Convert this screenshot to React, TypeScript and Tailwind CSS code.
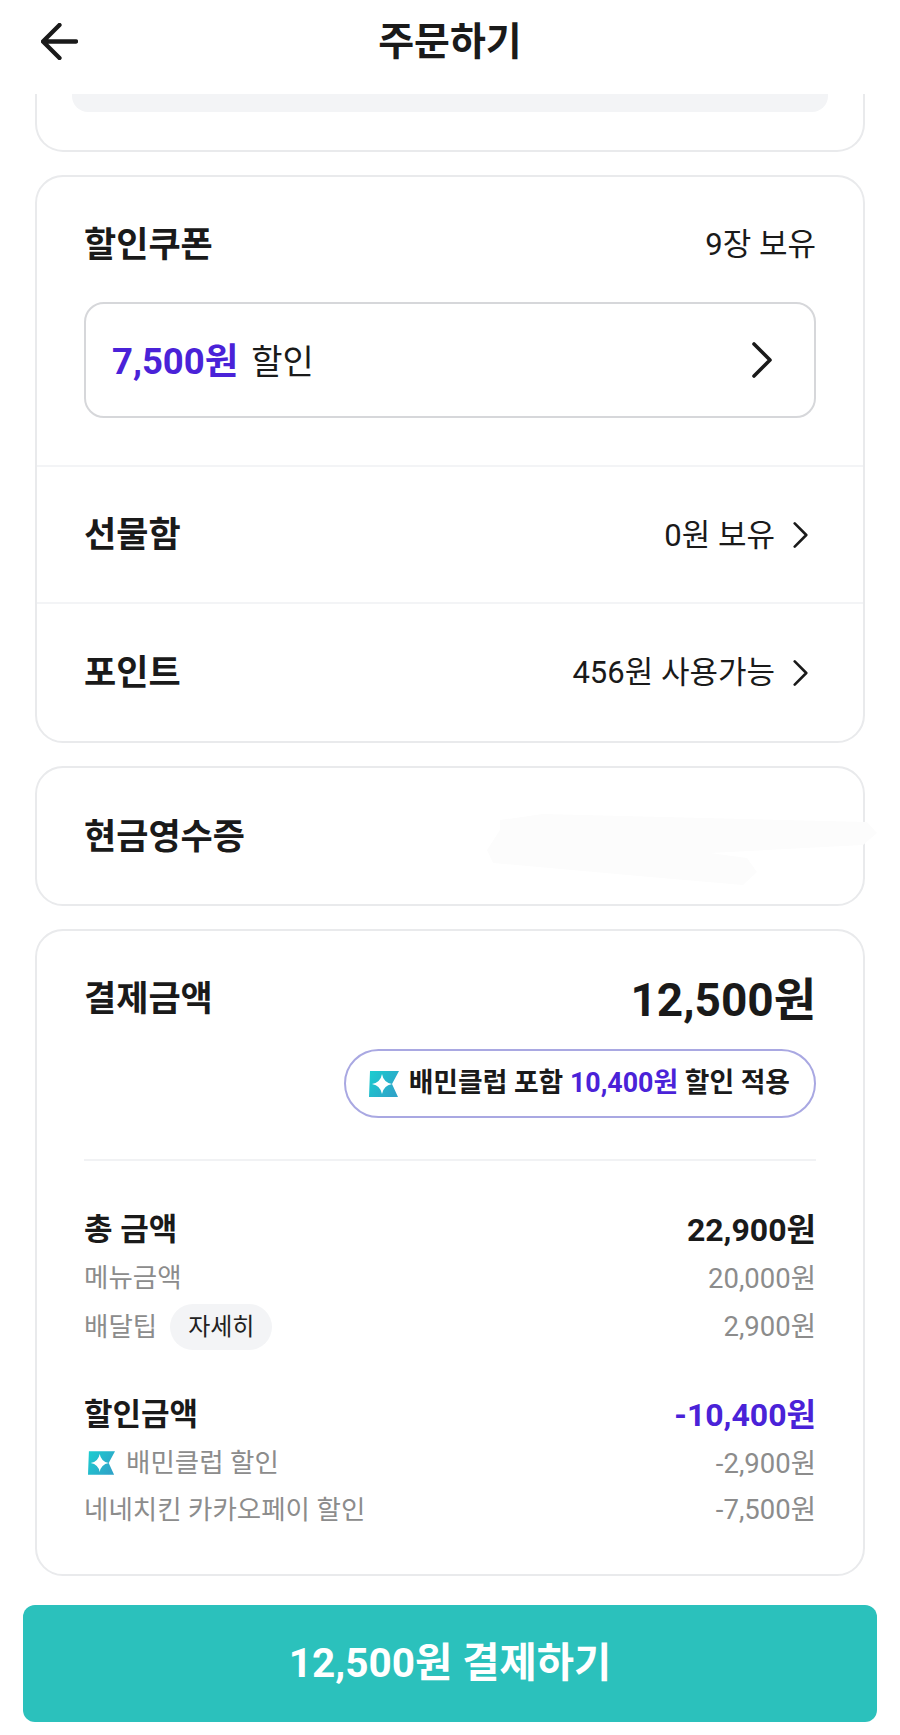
function ClubIcon({ id, className }: { id: string; className: string }) {
  return (
    <svg viewBox="0 0 30 26" className={className}>
      <defs>
        <linearGradient id={id} x1="0" y1="0" x2="1" y2="0.6">
          <stop offset="0" stopColor="#1bced0" />
          <stop offset="1" stopColor="#2ea4c8" />
        </linearGradient>
      </defs>
      <path d="M1 0H30L23 13L29 26H0Z" fill={`url(#${id})`} />
      <path d="M13 3Q14.5 11.5 23 13Q14.5 14.5 13 23Q11.5 14.5 3 13Q11.5 11.5 13 3Z" fill="#fff" />
    </svg>
  );
}

function Chevron({ className }: { className: string }) {
  return (
    <svg viewBox="0 0 20 36" fill="none" className={className}>
      <path d="M2 2L18 18L2 34" stroke="#1a1a1a" strokeWidth="3.6" strokeLinecap="round" strokeLinejoin="round" />
    </svg>
  );
}

function DetailRow({ label, value }: { label: React.ReactNode; value: string }) {
  return (
    <div className="flex h-[48.5px] items-center justify-between text-[26.5px] text-[#8c8c8c]">
      <div className="flex items-center">{label}</div>
      <span className="text-[27.5px]">{value}</span>
    </div>
  );
}

export default function App() {
  return (
    <div className="relative h-[1735px] w-[900px] overflow-hidden bg-white font-['Roboto','Noto_Sans_CJK_KR',sans-serif] text-[#1a1a1a]">
      <header className="relative flex h-[94px] items-center justify-center pb-[10px]">
        <svg viewBox="0 0 38 38" fill="none" className="absolute left-[41px] top-[23px] h-[37px] w-[37px]">
          <path d="M19 2L2 19L19 36M3 19H36" stroke="#1a1a1a" strokeWidth="4.4" strokeLinecap="round" strokeLinejoin="round" />
        </svg>
        <h1 className="text-[39px] font-bold">주문하기</h1>
      </header>

      <div className="flex flex-col gap-[23px] px-[35px]">
        <section className="h-[58px] rounded-b-[28px] border-x-2 border-b-2 border-[#e9eaec] px-[35px]">
          <div className="h-[18px] rounded-b-[16px] bg-[#f3f4f6]" />
        </section>

        <section className="rounded-[28px] border-2 border-[#e9eaec]">
          <div className="border-b-2 border-[#f3f4f6] pb-[47px] pl-[47px] pr-[47px] pt-[40px]">
            <div className="flex h-[54px] items-center justify-between">
              <span className="pt-[4px] text-[35px] font-bold">할인쿠폰</span>
              <span className="pt-[2px] text-[31px]">9장 보유</span>
            </div>
            <div className="mt-[31px] flex h-[116px] items-center justify-between rounded-[20px] border-2 border-[#d6d7da] pl-[26px] pr-[42px]">
              <div className="flex items-center gap-[13px] pt-[4px]">
                <span className="text-[36.5px] font-bold text-[#4a22d8]">7,500원</span>
                <span className="text-[34px]">할인</span>
              </div>
              <Chevron className="h-[36px] w-[20px]" />
            </div>
          </div>
          <div className="flex h-[137px] items-center justify-between border-b-2 border-[#f3f4f6] pl-[47px] pr-[55px]">
            <span className="pt-[4px] text-[35px] font-bold">선물함</span>
            <div className="flex items-center gap-[18px]">
              <span className="pt-[4px] text-[31px]">0원 보유</span>
              <Chevron className="h-[26px] w-[15px]" />
            </div>
          </div>
          <div className="flex h-[137px] items-center justify-between pl-[47px] pr-[55px]">
            <span className="pt-[4px] text-[35px] font-bold">포인트</span>
            <div className="flex items-center gap-[18px]">
              <span className="pt-[2px] text-[31px]">456원 사용가능</span>
              <Chevron className="h-[26px] w-[15px]" />
            </div>
          </div>
        </section>

        <section className="flex h-[140px] items-center rounded-[28px] border-2 border-[#e9eaec] px-[47px]">
          <span className="pt-[4px] text-[35px] font-bold">현금영수증</span>
        </section>

        <section className="h-[647px] rounded-[28px] border-2 border-[#e9eaec] px-[47px]">
          <div className="flex h-[134px] items-center justify-between pt-[4px]">
            <span className="text-[35px] font-bold">결제금액</span>
            <span className="text-[46px] font-bold">12,500원</span>
          </div>
          <div className="flex justify-end">
            <div className="-mt-[16px] flex h-[69px] items-center gap-[10px] rounded-full border-2 border-[#a9a8e2] pl-[23px] pr-[24px] text-[26.8px] font-bold">
              <ClubIcon id="club-a" className="h-[26px] w-[30px]" />
              <span>
                배민클럽 포함 <span className="text-[#4a22d8]">10,400원</span> 할인 적용
              </span>
            </div>
          </div>
          <div className="mt-[41px] border-t-2 border-[#f1f2f4] pt-[45px]">
            <div className="flex h-[48px] items-center justify-between text-[32px] font-bold">
              <span className="text-[31px]">총 금액</span>
              <span>22,900원</span>
            </div>
            <DetailRow label="메뉴금액" value="20,000원" />
            <DetailRow
              label={
                <>
                  배달팁
                  <span className="ml-[13px] flex h-[46px] items-center rounded-full bg-[#f3f4f6] px-[18px] text-[24px] text-[#222222]">자세히</span>
                </>
              }
              value="2,900원"
            />
            <div className="mt-[40px] flex h-[48px] items-center justify-between text-[32px] font-bold">
              <span className="text-[31px]">할인금액</span>
              <span className="text-[#4a22d8]">-10,400원</span>
            </div>
            <DetailRow
              label={
                <>
                  <ClubIcon id="club-b" className="ml-[4px] mr-[11px] h-[24px] w-[27px]" />
                  배민클럽 할인
                </>
              }
              value="-2,900원"
            />
            <div className="-mt-[2px]">
              <DetailRow label="네네치킨 카카오페이 할인" value="-7,500원" />
            </div>
          </div>
        </section>
      </div>

      <div className="px-[23px] pt-[29px]">
        <button className="flex h-[117px] w-full items-center justify-center rounded-[12px] bg-[#2bc1bc] text-[40.5px] font-bold text-white">
          12,500원 결제하기
        </button>
      </div>

      {/* blurred out receipt number */}
      <svg viewBox="0 0 900 1735" className="pointer-events-none absolute inset-0 h-full w-full">
        <path d="M500 820L543 814L867 822L877 833L863 845L710 853L747 858L757 872L743 885L650 877L493 863L487 850L500 830Z" fill="#fcfcfc" />
      </svg>
    </div>
  );
}
